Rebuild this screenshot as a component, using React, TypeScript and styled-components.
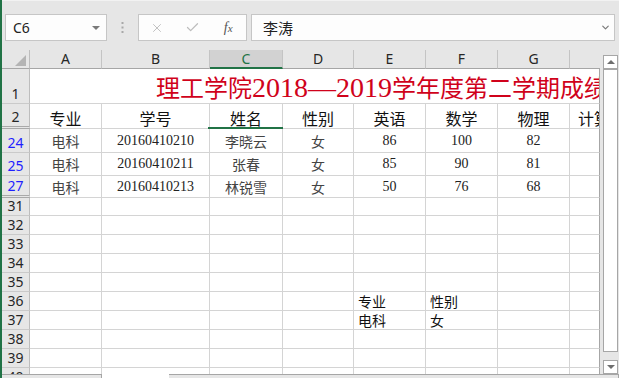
import React from 'react'
import styled, { createGlobalStyle } from 'styled-components'
import { X, Check, ChevronDown } from 'lucide-react'

const green = '#217346'
const gridLine = '#d4d4d4'
const edge = '#a6a6a6'
const colWidths = [72, 108, 73, 71, 72, 72, 72, 30]
const colTemplate = `28px ${colWidths.map((w) => `${w}px`).join(' ')}`
const letters = ['A', 'B', 'C', 'D', 'E', 'F', 'G', '']

const cjk = `"Noto Sans CJK SC", sans-serif`
const serif = `"Liberation Serif", "Noto Sans CJK SC", serif`
const ui = `"Noto Sans", "Noto Sans CJK SC", sans-serif`

const GlobalStyle = createGlobalStyle`
  html, body {
    margin: 0;
    padding: 0;
    background: #e6e6e6;
  }
  body {
    font-family: ${ui};
  }
`

const Window = styled.div`
  width: 619px;
  height: 378px;
  box-sizing: border-box;
  border-left: 2px solid ${green};
  background: #e6e6e6;
  display: flex;
  flex-direction: column;
  overflow: hidden;
`

const FormulaBar = styled.div`
  height: 50px;
  flex: none;
  box-sizing: border-box;
  padding: 13px 4px 0 3px;
  display: flex;
  align-items: flex-start;
  border-top: 1px solid #f2f2f2;
`

const Field = styled.div`
  height: 27px;
  box-sizing: border-box;
  border: 1px solid #c6c6c6;
  background: #fdfdfd;
  display: flex;
  align-items: center;
`

const NameBox = styled(Field)`
  width: 102px;
  padding: 0 6px 0 7px;
  justify-content: space-between;
  font-size: 14px;
  color: #222;
`

const DropArrow = styled.span`
  width: 0;
  height: 0;
  border-left: 4px solid transparent;
  border-right: 4px solid transparent;
  border-top: 4px solid #7a7a7a;
`

const Splitter = styled.div`
  width: 31px;
  height: 27px;
  display: flex;
  align-items: center;
  justify-content: center;
`

const ButtonBox = styled(Field)`
  width: 109px;
`

const FxButton = styled.div<{ $dim?: boolean }>`
  width: 36px;
  height: 100%;
  display: flex;
  align-items: center;
  justify-content: center;
  color: ${({ $dim }) => ($dim ? '#bdbdbd' : '#555')};
  font-family: ${serif};
  font-style: italic;
  font-size: 14px;
`

const FormulaInput = styled(Field)`
  flex: 1;
  margin-left: 4px;
  padding: 0 3px 0 11px;
  justify-content: space-between;
  font-family: ${cjk};
  font-size: 15px;
  color: #222;
`

const Main = styled.div`
  height: 324px;
  flex: none;
  display: flex;
`

const Sheet = styled.div`
  width: 598px;
  display: flex;
  flex-direction: column;
  overflow: hidden;
  background: #e6e6e6;
`

const Line = styled.div<{ $h: number }>`
  flex: none;
  height: ${({ $h }) => $h}px;
  display: grid;
  grid-template-columns: ${colTemplate};
`

const Corner = styled.div`
  position: relative;
  box-sizing: border-box;
  border-right: 1px solid #bdbdbd;
  border-bottom: 1px solid ${edge};
  &::after {
    content: '';
    position: absolute;
    right: 3px;
    bottom: 2px;
    border-left: 11px solid transparent;
    border-bottom: 11px solid #b4b4b4;
  }
`

const ColHead = styled.div<{ $sel?: boolean; $last?: boolean }>`
  box-sizing: border-box;
  background: ${({ $sel }) => ($sel ? '#d2d2d2' : '#e6e6e6')};
  border-right: ${({ $last }) => ($last ? 'none' : '1px solid #c4c4c4')};
  border-bottom: ${({ $sel }) => ($sel ? `2px solid ${green}` : `1px solid ${edge}`)};
  color: ${({ $sel }) => ($sel ? green : '#262626')};
  font-size: 14px;
  line-height: 1;
  display: flex;
  align-items: center;
  justify-content: center;
`

const RowHead = styled.div<{ $blue?: boolean; $gap?: boolean }>`
  box-sizing: border-box;
  background: #e6e6e6;
  border-right: 1px solid #bdbdbd;
  border-bottom: ${({ $gap }) => ($gap ? '3px double #a9a9a9' : '1px solid #cacaca')};
  color: ${({ $blue }) => ($blue ? '#1f1fff' : '#262626')};
  font-size: 14px;
  line-height: 1;
  display: flex;
  align-items: flex-end;
  justify-content: center;
  padding-bottom: 2px;
`

const Cell = styled.div<{ $align?: 'left' | 'center'; $last?: boolean; $sel?: boolean; $bottom?: boolean }>`
  position: relative;
  box-sizing: border-box;
  background: #fff;
  border-right: 1px solid ${({ $last }) => ($last ? edge : gridLine)};
  border-bottom: 1px solid ${gridLine};
  display: flex;
  align-items: ${({ $bottom }) => ($bottom ? 'flex-end' : 'center')};
  justify-content: ${({ $align }) => ($align === 'left' ? 'flex-start' : 'center')};
  padding: ${({ $align, $bottom }) => `0 0 ${$bottom ? 2 : 0}px ${$align === 'left' ? 4 : 0}px`};
  white-space: nowrap;
  &::after {
    content: '';
    display: ${({ $sel }) => ($sel ? 'block' : 'none')};
    position: absolute;
    left: -2px;
    right: -1px;
    bottom: -1px;
    height: 2px;
    background: ${green};
  }
`

const ClipCell = styled(Cell)`
  overflow: hidden;
  justify-content: flex-start;
  padding-left: 8px;
`

const TitleCell = styled.div`
  grid-column: 2 / -1;
  box-sizing: border-box;
  background: #fff;
  border-right: 1px solid ${edge};
  border-bottom: 1px solid ${gridLine};
  overflow: hidden;
  white-space: nowrap;
  display: flex;
  align-items: flex-end;
  padding: 0 0 1px 126px;
`

const TitleText = styled.span`
  font-family: ${serif};
  font-size: 24px;
  line-height: 1;
  color: #d0021b;
`

const TitleDigits = styled.span`
  font-size: 28px;
`

const HeadText = styled.span`
  font-family: ${cjk};
  font-size: 16px;
  line-height: 1;
  color: #111;
`

const CnText = styled.span`
  font-family: ${cjk};
  font-size: 14px;
  line-height: 1;
  color: #444;
`

const NumText = styled.span`
  font-family: ${serif};
  font-size: 14px;
  line-height: 1;
  color: #222;
`

const PlainText = styled.span`
  font-family: ${cjk};
  font-size: 14px;
  line-height: 1;
  color: #111;
`

const VScroll = styled.div`
  width: 15px;
  margin-left: 3px;
  padding-top: 5px;
  display: flex;
  flex-direction: column;
`

const ScrollBtn = styled.div<{ $down?: boolean }>`
  height: 14px;
  flex: none;
  box-sizing: border-box;
  background: #fff;
  border: 1px solid ${edge};
  display: flex;
  align-items: center;
  justify-content: center;
  &::before {
    content: '';
    border-left: 4px solid transparent;
    border-right: 4px solid transparent;
    ${({ $down }) => ($down ? 'border-top: 4px solid #6e6e6e;' : 'border-bottom: 4px solid #6e6e6e;')}
  }
`

const Thumb = styled.div`
  height: 283px;
  flex: none;
  box-sizing: border-box;
  background: #fff;
  border: 1px solid ${edge};
`

const Track = styled.div`
  flex: 1;
`

const Bottom = styled.div`
  flex: 1;
  display: flex;
`

const TabPart = styled.div<{ $w?: number; $white?: boolean }>`
  box-sizing: border-box;
  ${({ $w }) => ($w ? `width: ${$w}px;` : 'flex: 1;')}
  background: ${({ $white }) => ($white ? '#fff' : '#e6e6e6')};
  border-top: ${({ $white }) => ($white ? 'none' : `1px solid ${edge}`)};
  border-right: ${({ $white }) => ($white ? 'none' : `1px solid ${edge}`)};
`

type Kind = 'head' | 'data'

interface RowData {
  n: string
  h: number
  blue?: boolean
  gap?: boolean
  title?: boolean
  kind?: Kind
  cells?: string[]
}

const students = [
  ['电科', '20160410210', '李晓云', '女', '86', '100', '82', ''],
  ['电科', '20160410211', '张春', '女', '85', '90', '81', ''],
  ['电科', '20160410213', '林锐雪', '女', '50', '76', '68', ''],
]

const empty = ['', '', '', '', '', '', '', '']

const rows: RowData[] = [
  { n: '1', h: 35, title: true },
  { n: '2', h: 25, gap: true, kind: 'head', cells: ['专业', '学号', '姓名', '性别', '英语', '数学', '物理', '计算机'] },
  { n: '24', h: 24, blue: true, kind: 'data', cells: students[0] },
  { n: '25', h: 23, blue: true, kind: 'data', cells: students[1] },
  { n: '27', h: 22, blue: true, gap: true, kind: 'data', cells: students[2] },
  { n: '31', h: 18, cells: empty },
  { n: '32', h: 19, cells: empty },
  { n: '33', h: 19, cells: empty },
  { n: '34', h: 19, cells: empty },
  { n: '35', h: 19, cells: empty },
  { n: '36', h: 19, cells: ['', '', '', '', '专业', '性别', '', ''] },
  { n: '37', h: 19, cells: ['', '', '', '', '电科', '女', '', ''] },
  { n: '38', h: 19, cells: empty },
  { n: '39', h: 19, cells: empty },
  { n: '40', h: 19, cells: empty },
]

const isNumber = (s: string) => /^\d+$/.test(s)

function renderCells(row: RowData) {
  const cells = row.cells || empty
  return cells.map((text, i) => {
    const last = i === cells.length - 1
    if (row.kind === 'head') {
      if (last) {
        return (
          <ClipCell key={i} $last $bottom>
            <HeadText>{text}</HeadText>
          </ClipCell>
        )
      }
      return (
        <Cell key={i} $bottom $sel={i === 2}>
          <HeadText>{text}</HeadText>
        </Cell>
      )
    }
    if (row.kind === 'data') {
      return (
        <Cell key={i} $last={last}>
          {isNumber(text) ? <NumText>{text}</NumText> : <CnText>{text}</CnText>}
        </Cell>
      )
    }
    return (
      <Cell key={i} $last={last} $align='left' $bottom>
        {text && <PlainText>{text}</PlainText>}
      </Cell>
    )
  })
}

export default function App() {
  return (
    <>
      <GlobalStyle />
      <Window>
        <FormulaBar>
          <NameBox>
            <span>C6</span>
            <DropArrow />
          </NameBox>
          <Splitter>
            <svg width='3' height='11' viewBox='0 0 3 11'>
              <rect x='0.5' y='0' width='2' height='2' fill='#a8a8a8' />
              <rect x='0.5' y='4.5' width='2' height='2' fill='#a8a8a8' />
              <rect x='0.5' y='9' width='2' height='2' fill='#a8a8a8' />
            </svg>
          </Splitter>
          <ButtonBox>
            <FxButton $dim><X size={14} strokeWidth={1.6} /></FxButton>
            <FxButton $dim><Check size={15} strokeWidth={2} /></FxButton>
            <FxButton>f<span style={{ fontSize: 11 }}>x</span></FxButton>
          </ButtonBox>
          <FormulaInput>
            <span>李涛</span>
            <ChevronDown size={11} strokeWidth={2.6} color='#7a7a7a' />
          </FormulaInput>
        </FormulaBar>
        <Main>
          <Sheet>
            <Line $h={19}>
              <Corner />
              {letters.map((l, i) => (
                <ColHead key={i} $sel={l === 'C'} $last={i === letters.length - 1}>{l}</ColHead>
              ))}
            </Line>
            {rows.map((row) => (
              <Line key={row.n} $h={row.h}>
                <RowHead $blue={row.blue} $gap={row.gap}>{row.n}</RowHead>
                {row.title ? (
                  <TitleCell>
                    <TitleText>
                      理工学院<TitleDigits>2018—2019</TitleDigits>学年度第二学期成绩表
                    </TitleText>
                  </TitleCell>
                ) : (
                  renderCells(row)
                )}
              </Line>
            ))}
          </Sheet>
          <VScroll>
            <ScrollBtn />
            <Thumb />
            <Track />
            <ScrollBtn $down />
          </VScroll>
        </Main>
        <Bottom>
          <TabPart $w={100} />
          <TabPart $w={67} $white />
          <TabPart />
        </Bottom>
      </Window>
    </>
  )
}
